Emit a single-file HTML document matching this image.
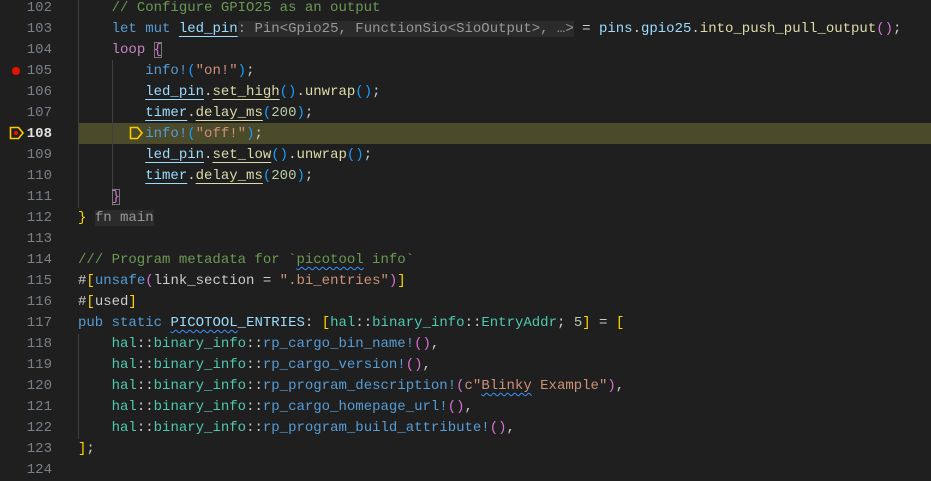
<!DOCTYPE html>
<html><head><meta charset="utf-8"><style>
html,body{margin:0;padding:0;background:#1f1f1f;width:931px;height:473px;overflow:hidden}
.l{position:absolute;left:0;width:931px;height:21px;font:14px/21px "Liberation Mono",monospace;white-space:pre;color:#cccccc}
.n{position:absolute;left:0;width:52px;text-align:right;color:#7a8088}
.c{position:absolute;left:78px}
.cm{color:#6a9955}.k{color:#569cd6}.v{color:#9cdcfe}.f{color:#dcdcaa}.s{color:#ce9178}.num{color:#b5cea8}
.ty{color:#4ec9b0}.g{color:#ffd700}.p{color:#da70d6}.b{color:#179fff}.pk{color:#c586c0}
.h{background:#2b2b2b;color:#989898}
.uv{text-decoration:underline;text-decoration-color:#9cdcfe;text-underline-offset:4px}
.uf{text-decoration:underline;text-decoration-color:#dcdcaa;text-underline-offset:4px}
.sq{text-decoration:underline wavy #3794ff;text-underline-offset:3px;text-decoration-thickness:1px}
.guide{position:absolute;width:1px;background:#404040}
</style></head><body>
<div style="position:absolute;left:78px;top:123px;width:853px;height:21px;background:#4b4a2a"></div>
<div class="guide" style="left:78px;top:0;height:208px"></div>
<div class="guide" style="left:112px;top:60px;height:146px"></div>
<div class="guide" style="left:78px;top:334px;height:105px"></div>

<div class="l" style="top:-2px"><span class="n">102</span><span class="c">    <span class="cm">// Configure GPIO25 as an output</span></span></div>
<div class="l" style="top:19px"><span class="n">103</span><span class="c">    <span class="k">let</span> <span class="k">mut</span> <span class="v uv">led_pin</span><span class="h">: Pin&lt;Gpio25, FunctionSio&lt;SioOutput&gt;, …&gt;</span> = <span class="v">pins</span>.<span class="v">gpio25</span>.<span class="f">into_push_pull_output</span><span class="p">()</span>;</span></div>
<div class="l" style="top:40px"><span class="n">104</span><span class="c">    <span class="pk">loop</span> <span class="p" style="outline:1px solid #777;outline-offset:-1px">{</span></span></div>
<div class="l" style="top:61px"><span class="n">105</span><span class="c">        <span class="k">info!</span><span class="b">(</span><span class="s">"on!"</span><span class="b">)</span>;</span></div>
<div class="l" style="top:82px"><span class="n">106</span><span class="c">        <span class="v uv">led_pin</span>.<span class="f uf">set_high</span><span class="b">()</span>.<span class="f">unwrap</span><span class="b">()</span>;</span></div>
<div class="l" style="top:103px"><span class="n">107</span><span class="c">        <span class="v uv">timer</span>.<span class="f uf">delay_ms</span><span class="b">(</span><span class="num">200</span><span class="b">)</span>;</span></div>
<div class="l" style="top:124px"><span class="n" style="color:#e0e0e0;font-weight:bold">108</span><span class="c">        <span class="k">info!</span><span class="b">(</span><span class="s">"off!"</span><span class="b">)</span>;</span></div>
<div class="l" style="top:145px"><span class="n">109</span><span class="c">        <span class="v uv">led_pin</span>.<span class="f uf">set_low</span><span class="b">()</span>.<span class="f">unwrap</span><span class="b">()</span>;</span></div>
<div class="l" style="top:166px"><span class="n">110</span><span class="c">        <span class="v uv">timer</span>.<span class="f uf">delay_ms</span><span class="b">(</span><span class="num">200</span><span class="b">)</span>;</span></div>
<div class="l" style="top:187px"><span class="n">111</span><span class="c">    <span class="p" style="outline:1px solid #777;outline-offset:-1px">}</span></span></div>
<div class="l" style="top:208px"><span class="n">112</span><span class="c"><span class="g">}</span> <span class="h">fn main</span></span></div>
<div class="l" style="top:229px"><span class="n">113</span></div>
<div class="l" style="top:250px"><span class="n">114</span><span class="c"><span class="cm">/// Program metadata for `<span class="sq">picotool</span> info`</span></span></div>
<div class="l" style="top:271px"><span class="n">115</span><span class="c">#<span class="g">[</span><span class="k">unsafe</span><span class="p">(</span>link_section = <span class="s">".bi_entries"</span><span class="p">)</span><span class="g">]</span></span></div>
<div class="l" style="top:292px"><span class="n">116</span><span class="c">#<span class="g">[</span>used<span class="g">]</span></span></div>
<div class="l" style="top:313px"><span class="n">117</span><span class="c"><span class="k">pub</span> <span class="k">static</span> <span class="v sq">PICOTOOL</span><span class="v">_ENTRIES</span>: <span class="g">[</span><span class="ty">hal</span>::<span class="ty">binary_info</span>::<span class="ty">EntryAddr</span>; <span class="num">5</span><span class="g">]</span> = <span class="g">[</span></span></div>
<div class="l" style="top:334px"><span class="n">118</span><span class="c">    <span class="ty">hal</span>::<span class="ty">binary_info</span>::<span class="k">rp_cargo_bin_name!</span><span class="p">()</span>,</span></div>
<div class="l" style="top:355px"><span class="n">119</span><span class="c">    <span class="ty">hal</span>::<span class="ty">binary_info</span>::<span class="k">rp_cargo_version!</span><span class="p">()</span>,</span></div>
<div class="l" style="top:376px"><span class="n">120</span><span class="c">    <span class="ty">hal</span>::<span class="ty">binary_info</span>::<span class="k">rp_program_description!</span><span class="p">(</span><span class="s">c"<span class="sq">Blinky</span> Example"</span><span class="p">)</span>,</span></div>
<div class="l" style="top:397px"><span class="n">121</span><span class="c">    <span class="ty">hal</span>::<span class="ty">binary_info</span>::<span class="k">rp_cargo_homepage_url!</span><span class="p">()</span>,</span></div>
<div class="l" style="top:418px"><span class="n">122</span><span class="c">    <span class="ty">hal</span>::<span class="ty">binary_info</span>::<span class="k">rp_program_build_attribute!</span><span class="p">()</span>,</span></div>
<div class="l" style="top:439px"><span class="n">123</span><span class="c"><span class="g">]</span>;</span></div>
<div class="l" style="top:460px"><span class="n">124</span></div>

<div style="position:absolute;left:12px;top:67px;width:8px;height:8px;border-radius:50%;background:#e51400"></div>
<svg style="position:absolute;left:9px;top:126px" width="16" height="14" viewBox="0 0 16 14"><path d="M1.5 1.5h8l4.5 5.5-4.5 5.5h-8z" fill="none" stroke="#ffcc00" stroke-width="1.6"/><circle cx="7" cy="7" r="2.2" fill="#e51400"/></svg>
<svg style="position:absolute;left:129px;top:126px" width="16" height="14" viewBox="0 0 16 14"><path d="M1.5 1.5h7l4.5 5.5-4.5 5.5h-7z" fill="none" stroke="#ffcc00" stroke-width="1.6"/></svg>
</body></html>
